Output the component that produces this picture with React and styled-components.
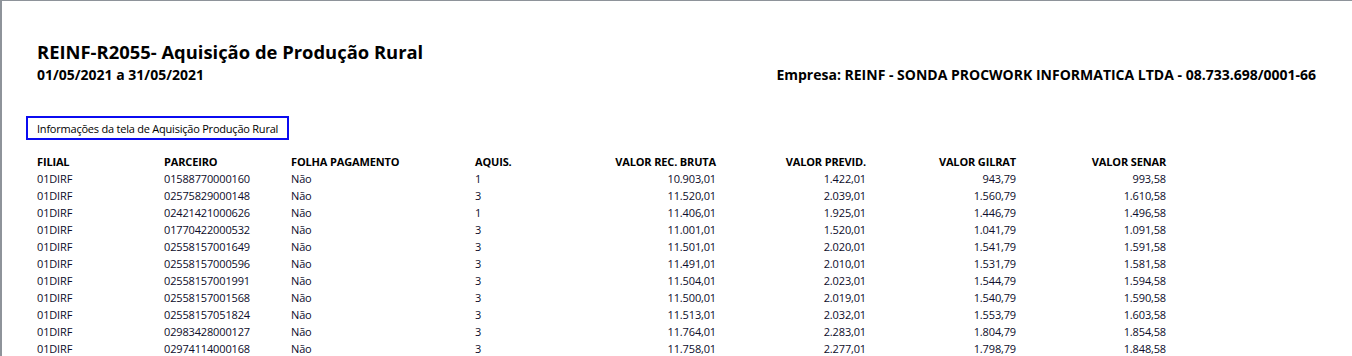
import React from "react";
import styled, { createGlobalStyle } from "styled-components";

const Global = createGlobalStyle`
  html, body { margin: 0; padding: 0; background: #fff; }
  body { font-family: "Open Sans", "Noto Sans", Arial, sans-serif; color: #000; }
`;

const Page = styled.div`
  box-sizing: border-box;
  width: 1352px;
  height: 356px;
  overflow: hidden;
  border-top: 1px solid #8e939a;
  border-left: 2px solid #8e939a;
  background: #fff;
  padding: 40px 36px 0 0;
`;

const Header = styled.div`
  padding-left: 35px;
  display: flex;
  flex-direction: column;
`;

const Title = styled.h1`
  margin: 0;
  font-size: 18.4px;
  line-height: 22px;
  font-weight: 700;
`;

const SubRow = styled.div`
  display: flex;
  justify-content: space-between;
  align-items: center;
  height: 22px;
  font-size: 14px;
  font-weight: 700;
`;

const InfoBox = styled.div`
  margin: 31px 0 0 24px;
  box-sizing: border-box;
  height: 24px;
  display: inline-flex;
  align-items: center;
  align-self: flex-start;
  padding: 0 9px;
  border: 2px solid #0b0bf0;
  font-size: 11px;
  letter-spacing: -0.22px;
`;

const Table = styled.div`
  margin: 12px 0 0 35px;
  display: grid;
  grid-template-columns: 127px 127px 184px 91px 150px 150px 150px 150px;
  grid-template-rows: 18px;
  grid-auto-rows: 17px;
  font-size: 11px;
  letter-spacing: -0.15px;
`;

const Cell = styled.div`
  display: flex;
  align-items: center;
  justify-content: ${(p) => (p.$right ? "flex-end" : "flex-start")};
  font-weight: ${(p) => (p.$head ? 700 : 400)};
  color: ${(p) => (p.$head ? "#000" : "#0c0c2a")};
  white-space: nowrap;
`;

const Wrap = styled.div`
  display: flex;
  flex-direction: column;
`;

const heads = [
  "FILIAL",
  "PARCEIRO",
  "FOLHA PAGAMENTO",
  "AQUIS.",
  "VALOR REC. BRUTA",
  "VALOR PREVID.",
  "VALOR GILRAT",
  "VALOR SENAR",
];

const rows = [
  ["01DIRF", "01588770000160", "Não", "1", "10.903,01", "1.422,01", "943,79", "993,58"],
  ["01DIRF", "02575829000148", "Não", "3", "11.520,01", "2.039,01", "1.560,79", "1.610,58"],
  ["01DIRF", "02421421000626", "Não", "1", "11.406,01", "1.925,01", "1.446,79", "1.496,58"],
  ["01DIRF", "01770422000532", "Não", "3", "11.001,01", "1.520,01", "1.041,79", "1.091,58"],
  ["01DIRF", "02558157001649", "Não", "3", "11.501,01", "2.020,01", "1.541,79", "1.591,58"],
  ["01DIRF", "02558157000596", "Não", "3", "11.491,01", "2.010,01", "1.531,79", "1.581,58"],
  ["01DIRF", "02558157001991", "Não", "3", "11.504,01", "2.023,01", "1.544,79", "1.594,58"],
  ["01DIRF", "02558157001568", "Não", "3", "11.500,01", "2.019,01", "1.540,79", "1.590,58"],
  ["01DIRF", "02558157051824", "Não", "3", "11.513,01", "2.032,01", "1.553,79", "1.603,58"],
  ["01DIRF", "02983428000127", "Não", "3", "11.764,01", "2.283,01", "1.804,79", "1.854,58"],
  ["01DIRF", "02974114000168", "Não", "3", "11.758,01", "2.277,01", "1.798,79", "1.848,58"],
];

export default function App() {
  return (
    <>
      <Global />
      <Page>
        <Wrap>
          <Header>
            <Title>REINF-R2055- Aquisição de Produção Rural</Title>
            <SubRow>
              <span>01/05/2021 a 31/05/2021</span>
              <span>Empresa: REINF - SONDA PROCWORK INFORMATICA LTDA - 08.733.698/0001-66</span>
            </SubRow>
          </Header>
          <InfoBox>Informações da tela de Aquisição Produção Rural</InfoBox>
          <Table>
            {heads.map((h, i) => (
              <Cell key={h} $head $right={i >= 4}>{h}</Cell>
            ))}
            {rows.map((r, ri) =>
              r.map((v, ci) => (
                <Cell key={ri + "-" + ci} $right={ci >= 4}>{v}</Cell>
              ))
            )}
          </Table>
        </Wrap>
      </Page>
    </>
  );
}
